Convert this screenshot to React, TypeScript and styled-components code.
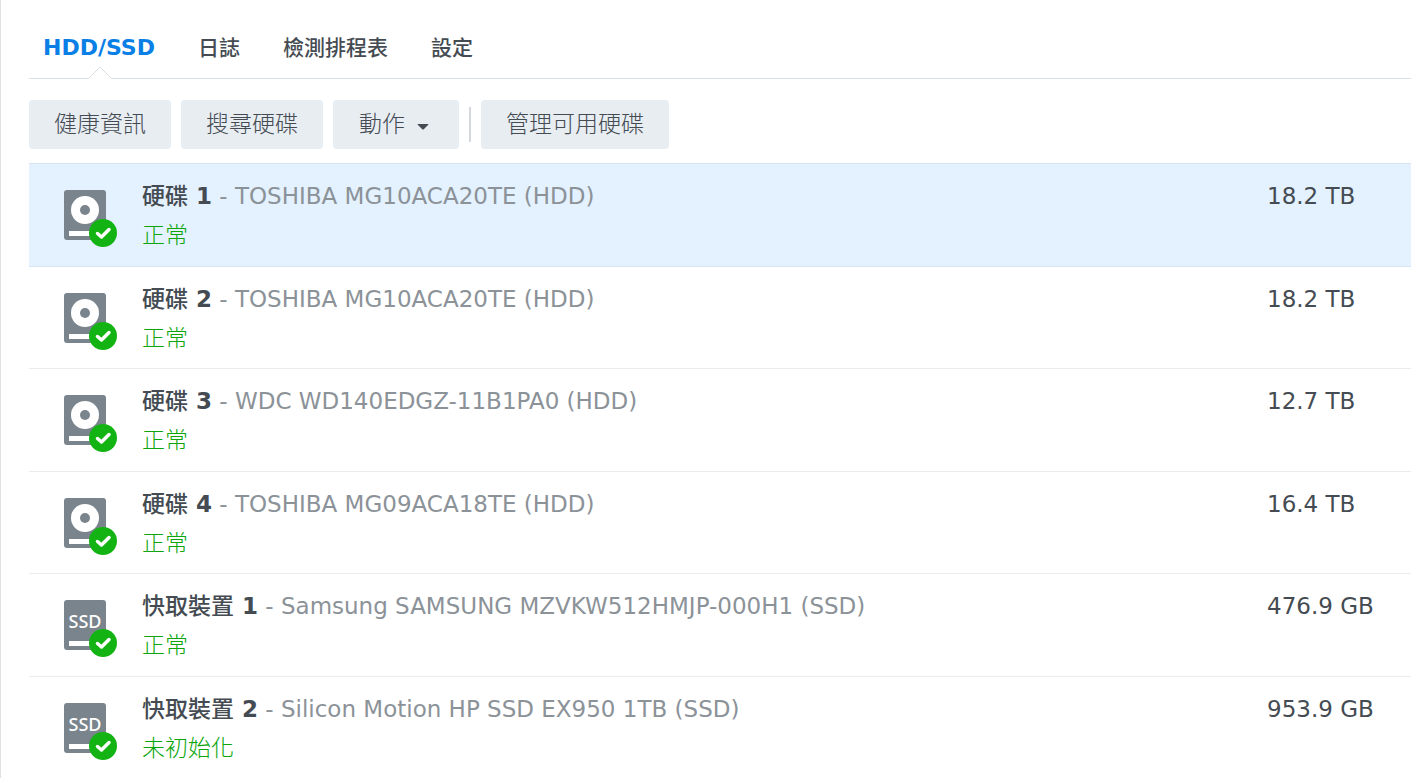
import React, { useState } from "react";
import styled, { createGlobalStyle } from "styled-components";

const latin = `"DejaVu Sans", "Noto Sans CJK TC", sans-serif`;
const cjk = `"Noto Sans CJK TC", "DejaVu Sans", sans-serif`;

const GlobalStyle = createGlobalStyle`
  *, *::before, *::after { box-sizing: border-box; }
  body {
    margin: 0;
    background: #fff;
    color: #444b52;
    font-family: ${latin};
  }
`;

const Page = styled.main`
  min-height: 100vh;
  padding-left: 28px;
  border-left: 1px solid #dfe1e3;
`;

const TabBar = styled.nav`
  display: flex;
  align-items: flex-end;
  gap: 43px;
  height: 79px;
  padding-left: 14px;
  border-bottom: 1px solid #dadfe3;
`;

const Tab = styled.a<{ $active?: boolean }>`
  position: relative;
  height: 48px;
  line-height: ${(p) => (p.$active ? 36 : 32)}px;
  font-family: ${(p) => (p.$active ? latin : cjk)};
  font-size: ${(p) => (p.$active ? 22 : 21)}px;
  font-weight: ${(p) => (p.$active ? 700 : 500)};
  color: ${(p) => (p.$active ? "#0a7fe6" : "#444b52")};
  text-decoration: none;
  white-space: nowrap;
`;

const Notch = styled.svg`
  position: absolute;
  left: 50%;
  bottom: -1px;
  margin-left: -11px;
`;

const Toolbar = styled.div`
  display: flex;
  align-items: center;
  gap: 10px;
  padding: 21px 0 14px;
`;

const ToolButton = styled.button<{ $menu?: boolean }>`
  display: flex;
  align-items: center;
  gap: 12px;
  height: 49px;
  padding: 0 ${(p) => (p.$menu ? 30 : 25)}px 5px ${(p) => (p.$menu ? 26 : 25)}px;
  border: 0;
  border-radius: 4px;
  background: #e8edf2;
  color: #444b52;
  font-family: ${cjk};
  font-size: 23px;
  font-weight: 300;
  line-height: 32px;
  white-space: nowrap;

  svg { margin-top: 9px; }
`;

const Divider = styled.span`
  width: 2px;
  height: 35px;
  background: #d5d9dd;
`;

const DiskTable = styled.table`
  width: 100%;
  border-collapse: separate;
  border-spacing: 0;
  table-layout: fixed;
`;

const DiskRow = styled.tr<{ $selected: boolean }>`
  height: 103px;
  background: ${(p) => (p.$selected ? "#e4f1fe" : "transparent")};
  &:nth-child(even) { height: 102px; }
  &:first-child { height: 104px; }
  &:first-child > td { border-top: 1px solid #d6e2ec; }
  &:not(:last-child) > td {
    border-bottom: 1px solid ${(p) => (p.$selected ? "#d6e5f2" : "#eaedef")};
  }
`;

const Cell = styled.td`
  padding: 14px 0 0;
  vertical-align: top;
  font-size: 23px;
  line-height: 32px;
  white-space: nowrap;
`;

const IconCell = styled(Cell)`
  width: 113px;
  padding: 26px 0 0 35px;
  line-height: 0;
`;

const SizeCell = styled(Cell)`
  width: 144px;
  padding-top: 16px;
`;

const Kind = styled.span`
  font-family: ${cjk};
  font-weight: 500;
`;

const Model = styled.span`
  color: #8b9298;
`;

const Title = styled.div`
  height: 39px;
`;

const Status = styled.div`
  font-family: ${cjk};
  font-weight: 300;
  color: #0ca60c;
`;

function DiskIcon({ type }: { type: "HDD" | "SSD" }) {
  return (
    <svg width="54" height="58" viewBox="0 0 54 58" role="img" aria-label={type}>
      <rect x="0" y="0" width="42" height="50" rx="3" fill="#7a848c" />
      {type === "HDD" ? (
        <>
          <circle cx="21" cy="20" r="14" fill="#fff" />
          <circle cx="21" cy="20" r="5" fill="#7a848c" />
        </>
      ) : (
        <text
          x="21"
          y="28"
          textAnchor="middle"
          fontFamily="Noto Sans, sans-serif"
          fontSize="18"
          fontWeight="500"
          fill="#fff"
        >
          SSD
        </text>
      )}
      <rect x="5" y="41" width="32" height="5" fill="#fff" />
      <circle cx="39" cy="43" r="14" fill="#14b314" />
      <path
        d="M33.500 43.500L37.500 47L45 39.500"
        fill="none"
        stroke="#fff"
        strokeWidth="3.500"
        strokeLinecap="round"
        strokeLinejoin="round"
      />
    </svg>
  );
}

type Disk = {
  kind: string;
  index: number;
  model: string;
  status: string;
  size: string;
  type: "HDD" | "SSD";
};

const disks: Disk[] = [
  { kind: "硬碟", index: 1, model: "TOSHIBA MG10ACA20TE (HDD)", status: "正常", size: "18.2 TB", type: "HDD" },
  { kind: "硬碟", index: 2, model: "TOSHIBA MG10ACA20TE (HDD)", status: "正常", size: "18.2 TB", type: "HDD" },
  { kind: "硬碟", index: 3, model: "WDC WD140EDGZ-11B1PA0 (HDD)", status: "正常", size: "12.7 TB", type: "HDD" },
  { kind: "硬碟", index: 4, model: "TOSHIBA MG09ACA18TE (HDD)", status: "正常", size: "16.4 TB", type: "HDD" },
  { kind: "快取裝置", index: 1, model: "Samsung SAMSUNG MZVKW512HMJP-000H1 (SSD)", status: "正常", size: "476.9 GB", type: "SSD" },
  { kind: "快取裝置", index: 2, model: "Silicon Motion HP SSD EX950 1TB (SSD)", status: "未初始化", size: "953.9 GB", type: "SSD" },
];

export default function App() {
  const [selected, setSelected] = useState(0);
  return (
    <>
      <GlobalStyle />
      <Page>
        <TabBar>
          <Tab href="#disks" $active aria-current="page">
            HDD/SSD
            <Notch width="24" height="13" viewBox="0 0 24 13">
              <path d="M0 12.500L12 1L24 12.500V13H0Z" fill="#fff" />
              <path d="M0 12.500L1 12L12 1L23 12L24 12.500" fill="none" stroke="#dadfe3" />
            </Notch>
          </Tab>
          <Tab href="#log">日誌</Tab>
          <Tab href="#schedule">檢測排程表</Tab>
          <Tab href="#settings">設定</Tab>
        </TabBar>
        <Toolbar>
          <ToolButton type="button">健康資訊</ToolButton>
          <ToolButton type="button">搜尋硬碟</ToolButton>
          <ToolButton type="button" $menu aria-haspopup="menu">
            動作
            <svg width="12" height="6" viewBox="0 0 12 6" aria-hidden="true">
              <path d="M1 0H11Q12 0 11 1L7 5Q6 6 5 5L1 1Q0 0 1 0Z" fill="#444b52" />
            </svg>
          </ToolButton>
          <Divider />
          <ToolButton type="button">管理可用硬碟</ToolButton>
        </Toolbar>
        <DiskTable>
          <tbody>
            {disks.map((disk, i) => (
              <DiskRow key={i} $selected={i === selected} onClick={() => setSelected(i)}>
                <IconCell>
                  <DiskIcon type={disk.type} />
                </IconCell>
                <Cell>
                  <Title>
                    <Kind>{disk.kind}</Kind>
                    <b> {disk.index}</b>
                    <Model> - {disk.model}</Model>
                  </Title>
                  <Status>{disk.status}</Status>
                </Cell>
                <SizeCell>{disk.size}</SizeCell>
              </DiskRow>
            ))}
          </tbody>
        </DiskTable>
      </Page>
    </>
  );
}
